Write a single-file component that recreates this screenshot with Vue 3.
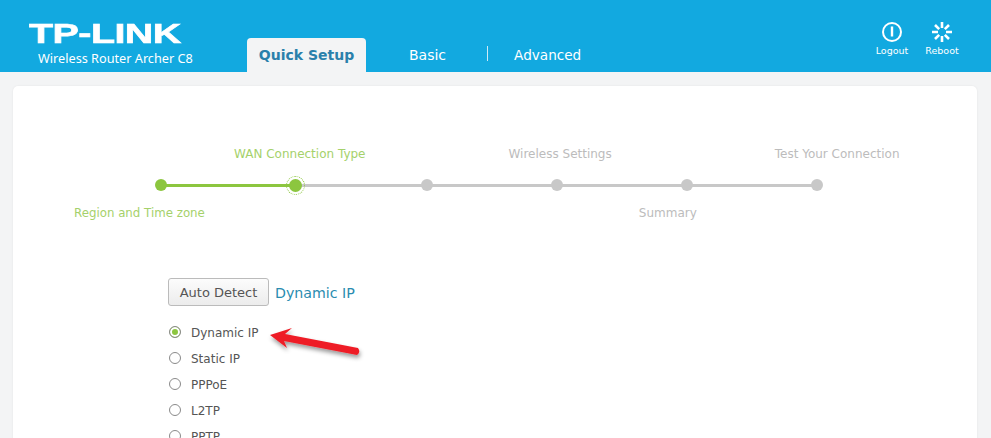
<script setup>
const topLabels = [
  { text: 'WAN Connection Type', cls: 'l-wan', on: true },
  { text: 'Wireless Settings', cls: 'l-wireless', on: false },
  { text: 'Test Your Connection', cls: 'l-test', on: false }
]
const bottomLabels = [
  { text: 'Region and Time zone', cls: 'l-region', on: true },
  { text: 'Summary', cls: 'l-summary', on: false }
]
const links = [
  { width: 134, on: true },
  { width: 132, on: false },
  { width: 130, on: false },
  { width: 130, on: false },
  { width: 130, on: false }
]
const options = ['Dynamic IP', 'Static IP', 'PPPoE', 'L2TP', 'PPTP']
</script>

<template>
  <div class="page">
    <header class="top">
      <div class="brand">
        <div class="logo">TP-LINK</div>
        <div class="model">Wireless Router Archer C8</div>
      </div>
      <nav class="tabs">
        <a class="tab active">Quick Setup</a>
        <a class="tab basic">Basic</a>
        <span class="sep"></span>
        <a class="tab advanced">Advanced</a>
      </nav>
      <div class="actions">
        <div class="action">
          <svg width="22" height="22" viewBox="0 0 22 22">
            <circle cx="11" cy="11" r="9" fill="none" stroke="#fff" stroke-width="2" />
            <rect x="9.8" y="5.5" width="2.4" height="10" fill="#fff" />
          </svg>
          <span>Logout</span>
        </div>
        <div class="action">
          <svg width="22" height="22" viewBox="0 0 22 22">
            <g stroke="#fff" stroke-width="2.6">
              <path d="M11 1v6M11 15v6M1 11h6M15 11h6M4 4l4.2 4.2M13.8 13.8L18 18M18 4l-4.2 4.2M8.2 13.8L4 18" />
            </g>
          </svg>
          <span>Reboot</span>
        </div>
      </div>
    </header>

    <main class="card">
      <div class="stepper">
        <div class="labels top-labels">
          <span v-for="l in topLabels" :key="l.text" :class="[l.cls, { on: l.on }]">{{ l.text }}</span>
        </div>
        <div class="track">
          <span class="dot on"></span>
          <template v-for="(link, i) in links" :key="i">
            <span class="link" :class="{ on: link.on }" :style="{ width: link.width + 'px' }"></span>
            <span v-if="i === 0" class="dot current"></span>
            <span v-else class="dot"></span>
          </template>
        </div>
        <div class="labels bottom-labels">
          <span v-for="l in bottomLabels" :key="l.text" :class="[l.cls, { on: l.on }]">{{ l.text }}</span>
        </div>
      </div>

      <div class="form">
        <div class="detect">
          <button class="btn">Auto Detect</button>
          <span class="result">Dynamic IP</span>
        </div>
        <ul class="radios">
          <li v-for="(o, i) in options" :key="o">
            <span class="radio" :class="{ checked: i === 0 }"></span>
            <span>{{ o }}</span>
          </li>
        </ul>
      </div>

      <svg class="arrow" width="110" height="50" viewBox="0 0 110 50">
        <defs>
          <filter id="arrowShadow" x="-20%" y="-40%" width="140%" height="200%">
            <feDropShadow dx="1" dy="3" stdDeviation="2" flood-color="#000" flood-opacity="0.4" />
          </filter>
        </defs>
        <path d="M10 11 L32 4 L25 10 L98 24 Q101 28 97 31 L24 17 L27 24 Z" fill="#ee1c25" filter="url(#arrowShadow)" />
      </svg>
    </main>
  </div>
</template>

<style scoped>
.page {
  position: relative;
  width: 991px;
  height: 438px;
  overflow: hidden;
  background: #f3f4f5;
  font-family: "DejaVu Sans", Verdana, sans-serif;
}
.top {
  display: flex;
  height: 72px;
  background: #12a9e0;
  color: #fff;
}
.brand {
  width: 247px;
  flex: none;
  padding: 23px 0 0 29px;
  box-sizing: border-box;
}
.logo {
  font-family: "Liberation Sans", Arial, sans-serif;
  font-weight: 700;
  font-size: 28px;
  line-height: 22px;
  height: 22px;
  width: 152px;
  white-space: nowrap;
  transform: scaleX(1.41);
  transform-origin: left center;
  -webkit-text-stroke: 0.6px #fff;
  letter-spacing: -0.4px;
}
.model {
  margin: 5px 0 0 9px;
  line-height: 16px;
  white-space: nowrap;
  font-family: "Noto Sans", "DejaVu Sans", sans-serif;
  font-size: 12.7px;
}
.tabs {
  display: flex;
  align-items: flex-end;
  height: 72px;
  flex: 1;
}
.tab {
  font-size: 14px;
  line-height: 34px;
  height: 34px;
  color: #fff;
}
.tab.active {
  width: 119px;
  text-align: center;
  background: #f3f4f5;
  color: #2a80ab;
  font-weight: 700;
  border-radius: 4px 4px 0 0;
}
.basic {
  margin-left: 43px;
}
.advanced {
  font-size: 13.6px;
}
.sep {
  width: 1px;
  height: 15px;
  background: #cfeaf6;
  margin: 0 26px 11px 41px;
}
.actions {
  display: flex;
  gap: 24px;
  padding: 21px 36px 0 0;
}
.action {
  display: flex;
  flex-direction: column;
  align-items: center;
  gap: 2px;
  width: 26px;
  font-size: 9.5px;
  line-height: 12px;
}
.card {
  position: relative;
  margin: 14px 14px 0 13px;
  height: 400px;
  background: #fff;
  border-radius: 5px;
  box-shadow: 0 0 2px rgba(0, 0, 0, 0.08);
}
.stepper {
  padding-top: 60px;
  font-size: 12px;
  color: #bcbcbc;
}
.labels {
  display: flex;
  height: 16px;
  line-height: 16px;
  white-space: nowrap;
}
.labels .on {
  color: #a5d16b;
}
.l-wan { margin-left: 221px; }
.l-wireless { margin-left: 143px; }
.l-test { margin-left: 163px; }
.l-region { margin-left: 61px; font-size: 11.8px; }
.l-summary { margin-left: 434px; }
.track {
  display: flex;
  align-items: center;
  height: 24px;
  margin: 11px 0 8px 148px;
}
.dot {
  flex: none;
  width: 12px;
  height: 12px;
  margin: 0 -6px;
  border-radius: 50%;
  background: #c8c8c8;
  position: relative;
  z-index: 1;
}
.dot.on {
  background: #8cc63f;
}
.dot.current {
  width: 13px;
  height: 13px;
  margin: 0 -6.5px;
  background: #8cc63f;
  outline: 1px dotted #8cc63f;
  outline-offset: 2px;
}
.link {
  flex: none;
  height: 3px;
  background: #c8c8c8;
}
.link.on {
  background: #8cc63f;
}
.form {
  margin: 57px 0 0 155px;
  font-size: 12px;
  color: #555;
}
.detect {
  display: flex;
  align-items: center;
  gap: 6px;
}
.btn {
  width: 101px;
  height: 28px;
  padding: 0;
  border: 1px solid #bbb;
  border-radius: 3px;
  background: linear-gradient(#fcfcfc, #ececec);
  color: #555;
  font: 13px "DejaVu Sans", Verdana, sans-serif;
}
.result {
  padding-top: 2px;
  font-size: 14.2px;
  color: #2a8cb0;
}
.radios {
  list-style: none;
  margin: 14px 0 0;
  padding: 0;
}
.radios li {
  display: flex;
  align-items: center;
  gap: 10px;
  height: 26px;
}
.radio {
  box-sizing: border-box;
  width: 12px;
  height: 12px;
  margin: -2px 0 0 1px;
  border: 1px solid #8a8a8a;
  border-radius: 50%;
  background: #fff;
}
.radio.checked {
  background: #8cc63f;
  box-shadow: inset 0 0 0 2px #fff;
}
.arrow {
  position: absolute;
  left: 247px;
  top: 238px;
}
</style>

<style>
html, body {
  margin: 0;
  background: #f3f4f5;
}
</style>
